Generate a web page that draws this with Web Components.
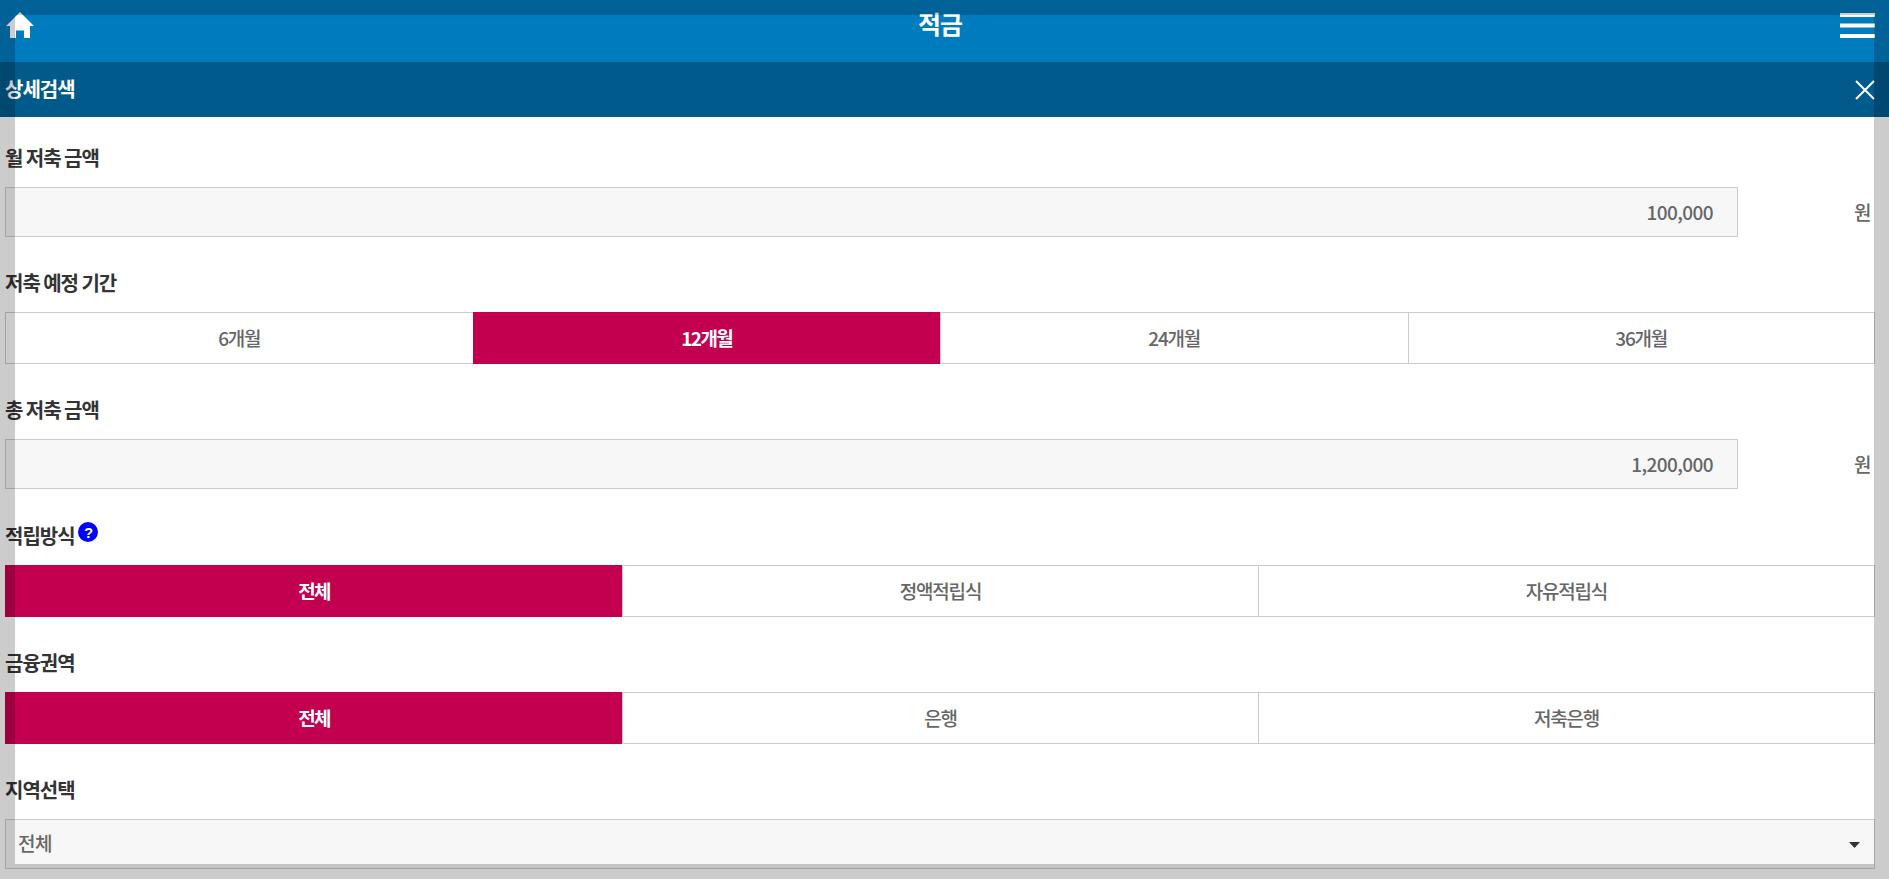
<!DOCTYPE html>
<html lang="ko"><head><meta charset="utf-8"><title>적금</title>
<style>
html,body{margin:0;padding:0;height:100%;overflow:hidden;background:#fff}
body{font-family:"Noto Sans CJK KR","Noto Sans",sans-serif;color:#666}
</style></head><body>
<app-page>
  <top-bar slot="head" title-text="적금"></top-bar>
  <search-head slot="head" title-text="상세검색"></search-head>
  <form-row label="월 저축 금액" first><amount-field value="100,000" unit="원"></amount-field></form-row>
  <form-row label="저축 예정 기간"><seg-group cols="25% 25% 25% 25%" selected="1" items="6개월|12개월|24개월|36개월"></seg-group></form-row>
  <form-row label="총 저축 금액"><amount-field value="1,200,000" unit="원"></amount-field></form-row>
  <form-row label="적립방식" help extra><seg-group cols="33% 34% 33%" selected="0" items="전체|정액적립식|자유적립식"></seg-group></form-row>
  <form-row label="금융권역"><seg-group cols="33% 34% 33%" selected="0" items="전체|은행|저축은행"></seg-group></form-row>
  <form-row label="지역선택"><select-box value="전체"></select-box></form-row>
</app-page>
<script>
const def=(n,html)=>customElements.define(n,class extends HTMLElement{
  connectedCallback(){ if(this.shadowRoot)return;
    const r=this.attachShadow({mode:'open'});
    r.innerHTML=typeof html==='function'?html(this):html;
  }
});
def('app-page',`<style>
:host{display:block;position:relative;width:1889px;height:879px;overflow:hidden;background:#fff}
.frame{position:absolute;inset:0;border:15px solid rgba(0,0,0,.2);pointer-events:none;z-index:5;box-sizing:border-box}
.body{display:flex;flex-direction:column;padding:0 14px 0 5px}
</style><slot name="head"></slot><div class="body"><slot></slot></div><div class="frame"></div>`);
def('top-bar',h=>`<style>
:host{display:flex;align-items:flex-start;justify-content:space-between;height:62px;background:#007bbd;box-sizing:border-box;padding:12px 14px 0 6px;position:relative}
.t{position:absolute;left:0;right:9px;top:4px;text-align:center;color:#fff;font-size:25px;font-weight:700;line-height:38px;letter-spacing:-1px}
svg{display:block}
.menu{margin-top:1px}
</style>
<svg class="home" width="28" height="26" viewBox="0 0 28 26"><path fill="#fff" d="M14 0 L28 14 H24 V26 H18 V18.500 H10 V26 H4 V14 H0 Z"/></svg>
<div class="t">${h.getAttribute('title-text')}</div>
<svg class="menu" width="35" height="25" viewBox="0 0 35 25"><path fill="#fff" d="M0 0H35V4H0ZM0 10.500H35V14.500H0ZM0 21H35V25H0Z"/></svg>`);
def('search-head',h=>`<style>
:host{display:flex;align-items:center;justify-content:space-between;height:55px;background:#005b8c;box-sizing:border-box;padding:0 14px 2px 5px}
.t{color:#fff;font-size:20px;font-weight:700;letter-spacing:-1px}
svg{display:block;margin-top:2px}
</style><div class="t">${h.getAttribute('title-text')}</div>
<svg width="20" height="20" viewBox="0 0 20 20"><path stroke="#fff" stroke-width="2" fill="none" d="M1 1L19 19M19 1L1 19"/></svg>`);
def('form-row',h=>`<style>
:host{display:block}
.l{display:flex;align-items:flex-start;height:${h.hasAttribute('first')?70:75}px;padding-top:${h.hasAttribute('first')?27:32}px;box-sizing:border-box;font-size:20px;font-weight:700;color:#333;letter-spacing:-1px;word-spacing:-1.2px;line-height:28px}
:host([extra]) .l{height:76px;padding-top:33px}
svg{margin:0 0 0 3px;flex:none}
</style><div class="l"><span>${h.getAttribute('label')}</span>${h.hasAttribute('help')?`<svg width="20" height="20" viewBox="0 0 20 20"><circle cx="10" cy="10" r="10" fill="#00f"/><text x="10" y="15.500" text-anchor="middle" fill="#fff" font-size="15" font-weight="700" font-family="Liberation Sans">?</text></svg>`:''}</div><slot></slot>`);
def('amount-field',h=>`<style>
:host{display:flex;height:50px;font-size:19px;letter-spacing:-.6px;font-weight:500}
.i{box-sizing:border-box;width:1733px;height:50px;border:1px solid #ccc;background:#f7f7f7;text-align:right;padding-right:24px;line-height:48px;color:#666}
.u{flex:1;text-align:right;line-height:50px;padding-right:4px;color:#666}
</style><div class="i">${h.getAttribute('value')}</div><div class="u">${h.getAttribute('unit')}</div>`);
def('seg-group',h=>{
  const items=h.getAttribute('items').split('|'),s=+h.getAttribute('selected');
  return `<style>
:host{display:grid;grid-template-columns:${h.getAttribute('cols')};height:52px;box-sizing:border-box;font-size:19px;letter-spacing:-1.2px;font-weight:500}
div{box-sizing:border-box;border:1px solid #ccc;border-right-width:0;line-height:50px;text-align:center;color:#666;background:#fff}
div:last-child{border-right-width:1px}
.on{background:#c2004f;border-color:#c2004f;color:#fff;font-weight:700;letter-spacing:-1.6px}
</style>`+items.map((t,i)=>`<div class="${i===s?'on':''}">${t}</div>`).join('');
});
def('select-box',h=>`<style>
:host{display:flex;align-items:center;justify-content:space-between;height:50px;box-sizing:border-box;border:1px solid #ccc;background:#f7f7f7;padding:0 14px 4px 12px;font-size:19px;letter-spacing:-.5px;color:#666;font-weight:500}
svg{display:block;margin-top:6px}
</style><span>${h.getAttribute('value')}</span><svg width="11" height="6" viewBox="0 0 11 6"><path fill="#333" d="M0 0H11L5.500 6Z"/></svg>`);
</script>
</body></html>
